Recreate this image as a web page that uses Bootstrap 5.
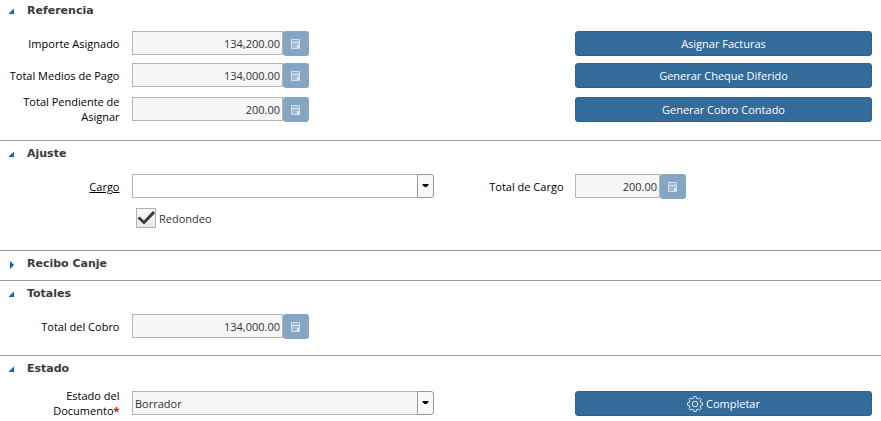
<!DOCTYPE html>
<html lang="es">
<head>
<meta charset="utf-8">
<title>Cobro</title>
<link rel="stylesheet" href="https://cdn.jsdelivr.net/npm/bootstrap@5.3.0/dist/css/bootstrap.min.css">
<style>
body{font:11px/15px "Open Sans",sans-serif;color:#000;background:#fff;overflow:hidden}
.sect{border-top:1px solid #9a9a9a}
.s-ref{height:140px;border-top:0}
.s-aju{height:110px}
.s-rec{height:30px}
.s-tot{height:75px}
.sect-title{height:30px;padding:5px 0 0 9px;gap:12px;font:bold 11px/15px "DejaVu Sans",sans-serif;color:#3a3a3a}
.s-ref .sect-title{height:28px;padding-top:3px}
.sect-title svg{width:6px;height:8px;margin-top:5px;fill:#0068c9;flex:none}
.frow{display:grid;grid-template-columns:120px 314px 130px 308px;height:32px;padding-top:3px}
.frow>.c1{margin-left:12px}
.frow>.c3{margin-left:11px}
.tall{padding-top:5px;height:34px}
.lbl{text-align:right;padding-top:5px;padding-right:.5px}
.tall .lbl{padding-top:0;margin-top:-3px}
.fld{height:24px;border:1px solid #b5b5b5;background:#f6f6f6;color:#333;padding:4px 2px;line-height:15px}
.num{width:151px;text-align:right}
.num.sm{width:85px}
.wide{width:285px;border-right:0}
.white{background:#fff}
.calc{width:26px;height:25px;border:0;border-radius:3px;background:#85a6c3}
.drop{width:17px;height:24px;border:1px solid #999;border-radius:0 3px 3px 0;background:#f8f8f8}
.act{--bs-btn-bg:#336b9b;--bs-btn-border-color:#2c648f;--bs-btn-color:#fff;width:297px;height:25px;font-size:11px;line-height:15px;border-radius:3px;gap:3px}
.chk{width:20px;height:20px;border:1px solid #a8b4c0;background:linear-gradient(#fafafa,#e9e9e9)}
.chk svg,.act svg,.calc svg,.drop svg{display:block;flex:none}
.opt{padding-left:4px;padding-top:2px;gap:3px;color:#333}
.opt-text{padding-top:3px}
.req{color:#f00;font-weight:bold;line-height:1}
</style>
</head>
<body>
<svg class="d-none" xmlns="http://www.w3.org/2000/svg">
<symbol id="open" viewBox="0 0 6 8"><path d="M5 .5V6H0v-.8z"/></symbol>
<symbol id="closed" viewBox="0 0 6 8"><path d="M1 .5h.6L5 4 1.600 7.500H1z"/></symbol>
<symbol id="calc" viewBox="0 0 10 12"><path d="M.5 1.500h8v9h-8z" fill="#a3bcd2" stroke="#d3e0eb"/><path d="M1 2h7v2H1z" fill="#9ab5cd"/><path d="M1 4.500h7" stroke="#dde7f0"/><path d="M6 7h2v3H6z" fill="#e6edf4"/></symbol>
<symbol id="down" viewBox="0 0 7 4"><path d="M.5 0h6v1l-2 2h-2l-2-2z" fill="#000"/></symbol>
</svg>
<main>
<section class="sect s-ref">
<div class="sect-title d-flex"><svg><use href="#open"/></svg><span>Referencia</span></div>
<div class="frow"><div class="lbl">Importe Asignado</div><div class="c1 d-flex"><div class="fld num">134,200.00</div><button class="calc d-flex align-items-center justify-content-center p-0"><svg width="10" height="12"><use href="#calc"/></svg></button></div><div></div><div class="c3"><button class="btn act d-flex align-items-center justify-content-center p-0">Asignar Facturas</button></div></div>
<div class="frow"><div class="lbl">Total Medios de Pago</div><div class="c1 d-flex"><div class="fld num">134,000.00</div><button class="calc d-flex align-items-center justify-content-center p-0"><svg width="10" height="12"><use href="#calc"/></svg></button></div><div></div><div class="c3"><button class="btn act d-flex align-items-center justify-content-center p-0">Generar Cheque Diferido</button></div></div>
<div class="frow tall"><div class="lbl">Total Pendiente de<br>Asignar</div><div class="c1 d-flex"><div class="fld num">200.00</div><button class="calc d-flex align-items-center justify-content-center p-0"><svg width="10" height="12"><use href="#calc"/></svg></button></div><div></div><div class="c3"><button class="btn act d-flex align-items-center justify-content-center p-0">Generar Cobro Contado</button></div></div>
</section>
<section class="sect s-aju">
<div class="sect-title d-flex"><svg><use href="#open"/></svg><span>Ajuste</span></div>
<div class="frow"><div class="lbl text-decoration-underline">Cargo</div><div class="c1 d-flex"><div class="fld wide white"></div><div class="drop d-flex align-items-center justify-content-center"><svg width="7" height="4"><use href="#down"/></svg></div></div><div class="lbl">Total de Cargo</div><div class="c3 d-flex"><div class="fld num sm">200.00</div><button class="calc d-flex align-items-center justify-content-center p-0"><svg width="10" height="12"><use href="#calc"/></svg></button></div></div>
<div class="frow"><div></div><div class="c1 opt d-flex"><span class="chk"><svg width="18" height="18" viewBox="0 0 18 18"><path d="M1.500 8.500 7 13.500 17 3" fill="none" stroke="#3c3c3c" stroke-width="3"/></svg></span><span class="opt-text">Redondeo</span></div></div>
</section>
<section class="sect s-rec">
<div class="sect-title d-flex"><svg><use href="#closed"/></svg><span>Recibo Canje</span></div>
</section>
<section class="sect s-tot">
<div class="sect-title d-flex"><svg><use href="#open"/></svg><span>Totales</span></div>
<div class="frow"><div class="lbl">Total del Cobro</div><div class="c1 d-flex"><div class="fld num">134,000.00</div><button class="calc d-flex align-items-center justify-content-center p-0"><svg width="10" height="12"><use href="#calc"/></svg></button></div></div>
</section>
<section class="sect">
<div class="sect-title d-flex"><svg><use href="#open"/></svg><span>Estado</span></div>
<div class="frow tall"><div class="lbl">Estado del<br>Documento<span class="req">*</span></div><div class="c1 d-flex"><div class="fld wide">Borrador</div><div class="drop d-flex align-items-center justify-content-center"><svg width="7" height="4"><use href="#down"/></svg></div></div><div></div><div class="c3"><button class="btn act d-flex align-items-center justify-content-center p-0"><svg width="16" height="16" viewBox="0 0 16 16" fill="none" stroke="#dfe9f2" stroke-linejoin="round"><path d="M6.800.6h2.400l.4 1.900 1.300.5 1.600-1 1.600 1.600-1 1.600.5 1.300 1.900.4v2.300l-1.900.4-.5 1.300 1 1.600-1.600 1.600-1.600-1-1.300.5-.4 1.800H6.800l-.4-1.800-1.300-.5-1.600 1-1.600-1.600 1-1.600-.5-1.300-1.900-.4V6.900l1.900-.4.5-1.300-1-1.600L3.500 2l1.600 1 1.300-.5z"/><circle cx="8" cy="8" r="2.800"/></svg>Completar</button></div></div>
</section>
</main>
<script src="https://cdn.jsdelivr.net/npm/bootstrap@5.3.0/dist/js/bootstrap.bundle.min.js"></script>
</body>
</html>
